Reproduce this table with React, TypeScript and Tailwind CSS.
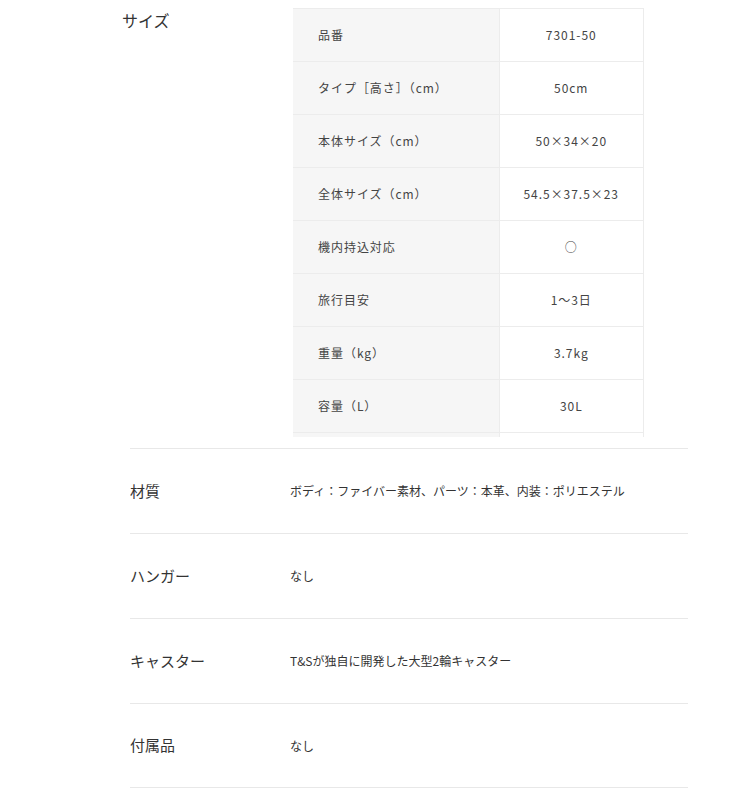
const specs: [string, string][] = [
  ["品番", "7301-50"],
  ["タイプ［高さ］（cm）", "50cm"],
  ["本体サイズ（cm）", "50×34×20"],
  ["全体サイズ（cm）", "54.5×37.5×23"],
  ["機内持込対応", "○"],
  ["旅行目安", "1～3日"],
  ["重量（kg）", "3.7kg"],
  ["容量（L）", "30L"],
];

const details: [string, string][] = [
  ["材質", "ボディ：ファイバー素材、パーツ：本革、内装：ポリエステル"],
  ["ハンガー", "なし"],
  ["キャスター", "T&Sが独自に開発した大型2輪キャスター"],
  ["付属品", "なし"],
];

export default function App() {
  return (
    <div
      className="min-h-[799px] bg-white text-[#333]"
      style={{ fontFamily: '"Noto Sans CJK JP", "Noto Sans", sans-serif' }}
    >
      <div className="flex pl-[122px] pt-2">
        <div className="w-[171px] text-[16px] leading-6">サイズ</div>
        <div className="h-[429px] w-[351px] overflow-hidden">
          <table className="w-full border-collapse text-[12px] tracking-[0.08em] text-[#444]">
            <tbody>
              {specs.map(([k, v]) => (
                <tr key={k} className="h-[53px]">
                  <td className="w-[206px] border border-l-0 border-[#ececec] bg-[#f6f6f6] pl-[25px]">{k}</td>
                  <td className="border border-[#ececec] text-center">{v}</td>
                </tr>
              ))}
              <tr className="h-[53px]">
                <td className="border border-l-0 border-[#ececec] bg-[#f6f6f6]" />
                <td className="border border-[#ececec]" />
              </tr>
            </tbody>
          </table>
        </div>
      </div>
      <div className="mr-[42px] ml-[130px] mt-[11px]">
        {details.map(([k, v]) => (
          <div key={k} className="flex h-[85px] items-center border-t border-[#e8e8e8] last:border-b">
            <div className="w-[160px] text-[15px]">{k}</div>
            <div className="text-[12px]">{v}</div>
          </div>
        ))}
      </div>
    </div>
  );
}
